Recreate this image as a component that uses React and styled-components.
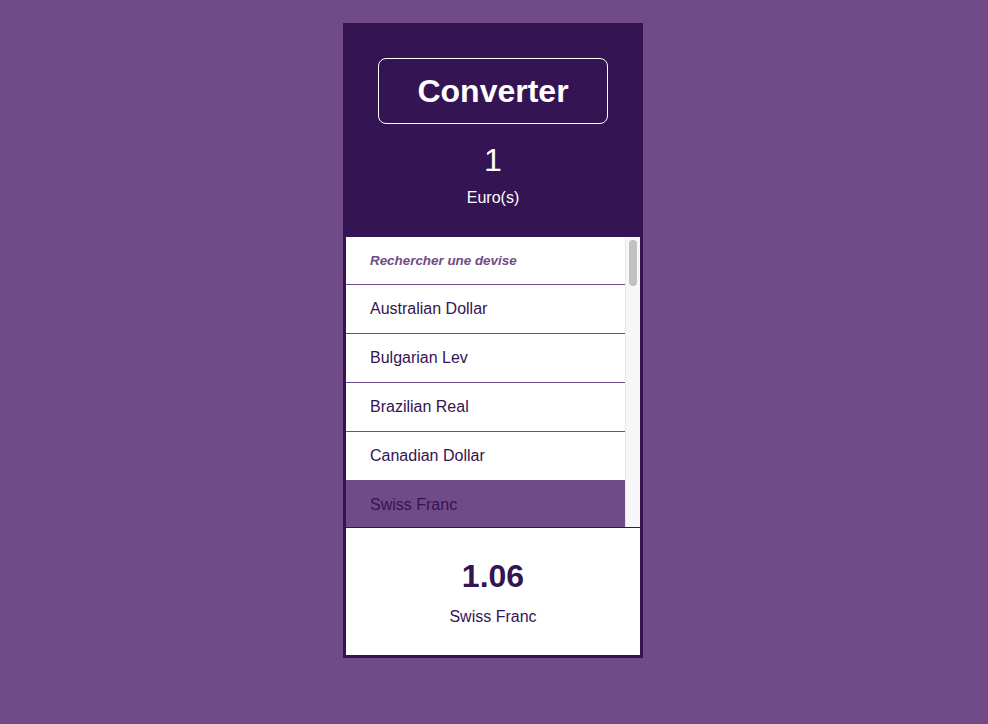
import React, { useState } from 'react'
import styled, { createGlobalStyle } from 'styled-components'

const GlobalStyle = createGlobalStyle`
  body {
    margin: 0;
    background-color: #714b87;
    font-family: "Liberation Sans", Arial, sans-serif;
  }
`

const Page = styled.div`
  display: flex;
  justify-content: center;
  padding: 23px 2px 0 0;
`

const Card = styled.div`
  width: 294px;
  border: 3px solid #341453;
  background-color: #ffffff;
  display: flex;
  flex-direction: column;
`

const Header = styled.header`
  background-color: #341453;
  display: flex;
  flex-direction: column;
  align-items: center;
  padding: 32px 0 30px;
`

const Title = styled.h1`
  margin: 0;
  width: 228px;
  height: 64px;
  border: 1px solid #ffffff;
  border-radius: 8px;
  color: #ffffff;
  font-size: 32px;
  font-weight: 700;
  display: flex;
  align-items: center;
  justify-content: center;
`

const Amount = styled.div`
  margin-top: 18px;
  color: #ffffff;
  font-size: 32px;
  line-height: 37px;
`

const BaseLabel = styled.div`
  margin-top: 10px;
  color: #ffffff;
  font-size: 16px;
  line-height: 18px;
`

const ListArea = styled.div`
  display: flex;
  height: 290px;
`

const List = styled.ul`
  flex: 1;
  margin: 0;
  padding: 0;
  list-style: none;
  overflow-y: scroll;
  scrollbar-width: none;

  &::-webkit-scrollbar {
    display: none;
  }
`

const ScrollTrack = styled.div`
  position: relative;
  width: 14px;
  background-color: #f7f7f7;
  border-left: 1px solid #e6e6e6;
`

const ScrollThumb = styled.div`
  position: absolute;
  left: 3px;
  width: 8px;
  border-radius: 4px;
  background-color: #c1c1c1;
`

const SearchRow = styled.li`
  border-bottom: 1px solid #714b87;
`

const Search = styled.input`
  width: 100%;
  box-sizing: border-box;
  height: 47px;
  border: none;
  outline: none;
  padding: 0 24px;
  font-family: "Liberation Sans", Arial, sans-serif;
  font-size: 13.4px;
  color: #341453;

  &::placeholder {
    color: #714b87;
    font-style: italic;
    font-weight: 700;
  }
`

const Item = styled.li`
  height: 48px;
  display: flex;
  align-items: center;
  padding-left: 24px;
  border-bottom: 1px solid #714b87;
  font-size: 16px;
  color: #341453;
  cursor: pointer;
  background-color: ${props => (props.$active ? '#714b87' : '#ffffff')};
`

const Result = styled.section`
  border-top: 1px solid #341453;
  display: flex;
  flex-direction: column;
  align-items: center;
  padding: 30px 0 29px;
`

const Value = styled.h2`
  margin: 0;
  font-size: 32px;
  line-height: 37px;
  font-weight: 700;
  color: #341453;
`

const Currency = styled.p`
  margin: 13px 0 0;
  font-size: 16px;
  line-height: 18px;
  color: #341453;
`

const currencies = [
  ['AUD', 'Australian Dollar', 1.56],
  ['BGN', 'Bulgarian Lev', 1.96],
  ['BRL', 'Brazilian Real', 6.11],
  ['CAD', 'Canadian Dollar', 1.47],
  ['CHF', 'Swiss Franc', 1.06],
  ['CNY', 'Chinese Yuan Renminbi', 7.82],
  ['CZK', 'Czech Koruna', 25.6],
  ['DKK', 'Danish Krone', 7.44],
  ['GBP', 'British Pound', 0.86],
  ['HKD', 'Hong Kong Dollar', 9.19],
  ['HRK', 'Croatian Kuna', 7.53],
  ['HUF', 'Hungarian Forint', 358.2],
  ['IDR', 'Indonesian Rupiah', 16897],
  ['ILS', 'Israeli New Sheqel', 3.87],
  ['INR', 'Indian Rupee', 87.9],
  ['ISK', 'Icelandic Krona', 145.9],
  ['JPY', 'Japanese Yen', 129.6],
  ['KRW', 'South Korean Won', 1341],
  ['MXN', 'Mexican Peso', 24.1],
  ['MYR', 'Malaysian Ringgit', 4.91],
  ['NOK', 'Norwegian Krone', 10.1],
  ['NZD', 'New Zealand Dollar', 1.65],
  ['PHP', 'Philippine Peso', 57.3],
  ['PLN', 'Polish Zloty', 4.56],
  ['RON', 'Romanian Leu', 4.92],
  ['RUB', 'Russian Ruble', 87.4],
  ['SEK', 'Swedish Krona', 10.1],
  ['SGD', 'Singapore Dollar', 1.59],
  ['THB', 'Thai Baht', 37.1],
  ['TRY', 'Turkish Lira', 9.86],
  ['USD', 'US Dollar', 1.18],
  ['ZAR', 'South African Rand', 17.4],
]

// list geometry, used for the drawn scrollbar
const VIEW_H = 290
const CONTENT_H = 48 + currencies.length * 49
const THUMB_H = Math.round((VIEW_H * VIEW_H) / CONTENT_H) - 6

const App = () => {
  const [selected, setSelected] = useState('CHF')
  const [scroll, setScroll] = useState(0)
  const current = currencies.find(c => c[0] === selected)

  const thumbTop = 3 + (scroll / (CONTENT_H - VIEW_H)) * (VIEW_H - 6 - THUMB_H)

  return (
    <Page>
      <GlobalStyle />
      <Card>
        <Header>
          <Title>Converter</Title>
          <Amount>1</Amount>
          <BaseLabel>Euro(s)</BaseLabel>
        </Header>
        <ListArea>
          <List onScroll={e => setScroll(e.currentTarget.scrollTop)}>
            <SearchRow>
              <Search placeholder="Rechercher une devise" />
            </SearchRow>
            {currencies.map(([code, name]) => (
              <Item key={code} $active={code === selected} onClick={() => setSelected(code)}>
                {name}
              </Item>
            ))}
          </List>
          <ScrollTrack>
            <ScrollThumb style={{ top: thumbTop, height: THUMB_H }} />
          </ScrollTrack>
        </ListArea>
        <Result>
          <Value>{current[2].toFixed(2)}</Value>
          <Currency>{current[1]}</Currency>
        </Result>
      </Card>
    </Page>
  )
}

export default App
